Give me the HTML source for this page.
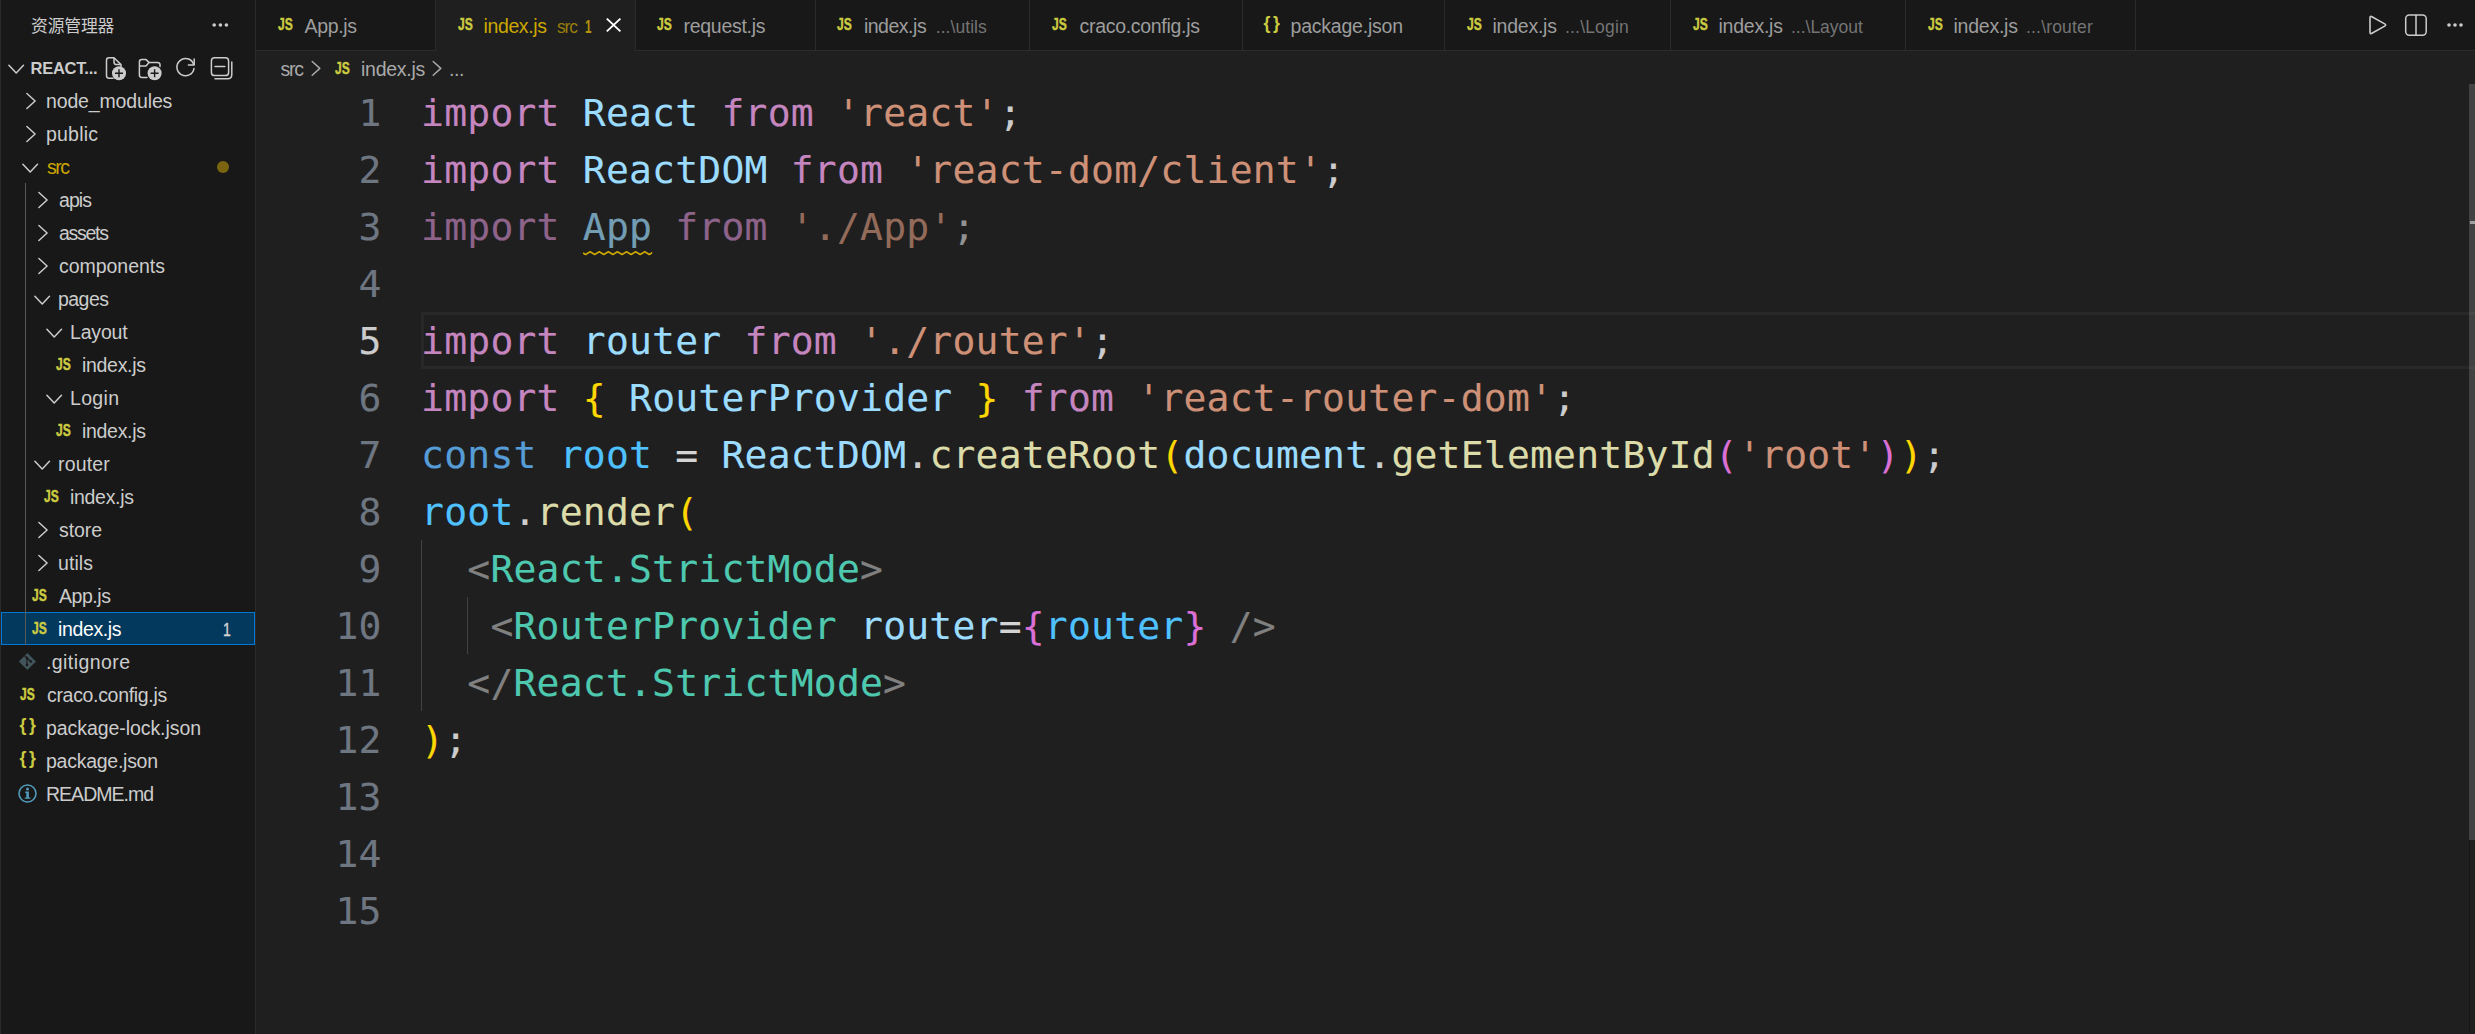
<!DOCTYPE html><html lang="zh-CN"><head><meta charset="utf-8"><title>index.js - VS Code</title><style>
html,body{margin:0;padding:0;background:#1f1f1f;overflow:hidden}
#app{position:relative;width:2475px;height:1034px;overflow:hidden;background:#1f1f1f}
.t{position:absolute;white-space:pre;line-height:1;font-family:"Liberation Sans","Noto Sans CJK SC",sans-serif}
.cl{position:absolute;white-space:pre;line-height:1;font-family:"DejaVu Sans Mono","Liberation Mono",monospace;font-size:38.0px;letter-spacing:0.2221px;-webkit-text-stroke:0.15px}
</style></head><body><div id="app">
<div style="position:absolute;left:0px;top:0px;width:2475px;height:1034px;background:#1f1f1f;"></div>
<div style="position:absolute;left:0px;top:0px;width:255px;height:1034px;background:#181818;"></div>
<div style="position:absolute;left:0px;top:0px;width:1px;height:1034px;background:#2b2b2b;"></div>
<div style="position:absolute;left:255px;top:0px;width:1px;height:1034px;background:#2b2b2b;"></div>
<div style="position:absolute;left:256px;top:0px;width:2219px;height:50px;background:#181818;"></div>
<div style="position:absolute;left:256px;top:50px;width:2219px;height:1px;background:#2b2b2b;"></div>
<div style="position:absolute;left:435px;top:0px;width:1px;height:50px;background:#2b2b2b;"></div>
<div style="position:absolute;left:436px;top:0px;width:199px;height:51px;background:#1f1f1f;"></div>
<div style="position:absolute;left:635px;top:0px;width:1px;height:50px;background:#2b2b2b;"></div>
<div style="position:absolute;left:815px;top:0px;width:1px;height:50px;background:#2b2b2b;"></div>
<div style="position:absolute;left:1029px;top:0px;width:1px;height:50px;background:#2b2b2b;"></div>
<div style="position:absolute;left:1242px;top:0px;width:1px;height:50px;background:#2b2b2b;"></div>
<div style="position:absolute;left:1444px;top:0px;width:1px;height:50px;background:#2b2b2b;"></div>
<div style="position:absolute;left:1670px;top:0px;width:1px;height:50px;background:#2b2b2b;"></div>
<div style="position:absolute;left:1905px;top:0px;width:1px;height:50px;background:#2b2b2b;"></div>
<div style="position:absolute;left:2135px;top:0px;width:1px;height:50px;background:#2b2b2b;"></div>
<svg style="position:absolute;left:604px;top:15px;overflow:visible;" width="20" height="20" viewBox="0 0 20 20" fill="none"><path d="M2.8 3.6 L16.4 16.4 M16.4 3.6 L2.8 16.4" stroke="#ffffff" stroke-width="1.9"/></svg>
<svg style="position:absolute;left:2360px;top:10px;overflow:visible;" width="40" height="34" viewBox="0 0 40 34" fill="none"><path d="M10.00 7.80 Q10.00 5.60 11.91 6.68 L24.69 13.92 Q26.60 15.00 24.69 16.08 L11.91 23.32 Q10.00 24.40 10.00 22.20 Z" stroke="#cccccc" stroke-width="1.6" stroke-linejoin="round"/></svg>
<svg style="position:absolute;left:2400px;top:10px;overflow:visible;" width="34" height="34" viewBox="0 0 34 34" fill="none"><rect x="5.7" y="5" width="20.5" height="20.2" rx="3.6" stroke="#cccccc" stroke-width="1.5"/><path d="M16 5 V25" stroke="#cccccc" stroke-width="1.5"/></svg>
<svg style="position:absolute;left:2440px;top:15px;overflow:visible;" width="30" height="20" viewBox="0 0 30 20" fill="none"><circle cx="9" cy="10" r="1.8" fill="#cccccc"/><circle cx="15" cy="10" r="1.8" fill="#cccccc"/><circle cx="21" cy="10" r="1.8" fill="#cccccc"/></svg>
<svg style="position:absolute;left:308px;top:58px;overflow:visible;" width="16" height="22" viewBox="0 0 16 22" fill="none"><path d="M4.2 3.5 L11.8 10.4 L4.2 17.2" stroke="#a9a9a9" stroke-width="1.5" stroke-linecap="round" stroke-linejoin="round"/></svg>
<svg style="position:absolute;left:429px;top:58px;overflow:visible;" width="16" height="22" viewBox="0 0 16 22" fill="none"><path d="M4.2 3.5 L11.8 10.4 L4.2 17.2" stroke="#a9a9a9" stroke-width="1.5" stroke-linecap="round" stroke-linejoin="round"/></svg>
<svg style="position:absolute;left:205px;top:15px;overflow:visible;" width="30" height="20" viewBox="0 0 30 20" fill="none"><circle cx="9.2" cy="10" r="1.8" fill="#cccccc"/><circle cx="15.4" cy="10" r="1.8" fill="#cccccc"/><circle cx="21.4" cy="10" r="1.8" fill="#cccccc"/></svg>
<svg style="position:absolute;left:8.0px;top:63.599999999999994px;overflow:visible;" width="18" height="12" viewBox="0 0 18 12" fill="none"><path d="M0.9 1.2 L8.2 9 L15.5 1.2" stroke="#cccccc" stroke-width="1.5" stroke-linecap="round" stroke-linejoin="round"/></svg>
<svg style="position:absolute;left:100px;top:50px;overflow:visible;" width="30" height="34" viewBox="0 0 30 34" fill="none"><path d="M13 28.2 H9 Q6.5 28.2 6.5 25.8 V10.2 Q6.5 7.8 9 7.8 H14 L21 14.6 V17" stroke="#cccccc" stroke-width="1.5" stroke-linejoin="round" stroke-linecap="round"/><path d="M14 8 V12 Q14 14.6 16.5 14.6 H21" stroke="#cccccc" stroke-width="1.5" stroke-linejoin="round"/><circle cx="19" cy="23.2" r="7" fill="#cccccc"/><path d="M19 19.2 V27.2 M15 23.2 H23" stroke="#181818" stroke-width="1.4"/></svg>
<svg style="position:absolute;left:133px;top:50px;overflow:visible;" width="34" height="34" viewBox="0 0 34 34" fill="none"><path d="M14 27.4 H8.8 Q6.4 27.4 6.4 25 V12 Q6.4 9.6 8.8 9.6 H13 L16 12.4 H24.5 Q27 12.4 27 14.8 V16.5" stroke="#cccccc" stroke-width="1.5" stroke-linejoin="round" stroke-linecap="round"/><path d="M6.4 16 H13 L16 12.6" stroke="#cccccc" stroke-width="1.5" stroke-linejoin="round"/><circle cx="21.6" cy="23.2" r="7" fill="#cccccc"/><path d="M21.6 19.2 V27.2 M17.6 23.2 H25.6" stroke="#181818" stroke-width="1.4"/></svg>
<svg style="position:absolute;left:170px;top:50px;overflow:visible;" width="32" height="34" viewBox="0 0 32 34" fill="none"><path d="M23.6 14.2 A8.6 8.6 0 1 0 24 18.6" stroke="#cccccc" stroke-width="1.5" stroke-linecap="round"/><path d="M24.2 9 V15 H18.4" stroke="#cccccc" stroke-width="1.5" stroke-linecap="round" stroke-linejoin="round"/></svg>
<svg style="position:absolute;left:205px;top:50px;overflow:visible;" width="32" height="34" viewBox="0 0 32 34" fill="none"><rect x="6.4" y="7.8" width="17.2" height="17.8" rx="3.2" stroke="#cccccc" stroke-width="1.5"/><path d="M10 16.6 H19.8" stroke="#cccccc" stroke-width="1.5" stroke-linecap="round"/><path d="M26.8 12 V24.5 Q26.8 28.8 22.5 28.8 H10" stroke="#cccccc" stroke-width="1.5" stroke-linecap="round"/></svg>
<div style="position:absolute;left:1px;top:612px;width:254px;height:33px;background:#04395e;box-sizing:border-box;border:1px solid #0078d4;"></div>
<div style="position:absolute;left:25px;top:183px;width:1px;height:462px;background:#585858;"></div>
<svg style="position:absolute;left:25.6px;top:92px;overflow:visible;" width="12" height="18" viewBox="0 0 12 18" fill="none"><path d="M0.9 1.5 L9.1 9 L0.9 16.5" stroke="#cccccc" stroke-width="1.5" stroke-linecap="round" stroke-linejoin="round"/></svg>
<svg style="position:absolute;left:25.6px;top:125px;overflow:visible;" width="12" height="18" viewBox="0 0 12 18" fill="none"><path d="M0.9 1.5 L9.1 9 L0.9 16.5" stroke="#cccccc" stroke-width="1.5" stroke-linecap="round" stroke-linejoin="round"/></svg>
<svg style="position:absolute;left:21.5px;top:162.6px;overflow:visible;" width="18" height="12" viewBox="0 0 18 12" fill="none"><path d="M0.9 1.2 L8.2 9 L15.5 1.2" stroke="#cccccc" stroke-width="1.5" stroke-linecap="round" stroke-linejoin="round"/></svg>
<svg style="position:absolute;left:37.6px;top:191px;overflow:visible;" width="12" height="18" viewBox="0 0 12 18" fill="none"><path d="M0.9 1.5 L9.1 9 L0.9 16.5" stroke="#cccccc" stroke-width="1.5" stroke-linecap="round" stroke-linejoin="round"/></svg>
<svg style="position:absolute;left:37.6px;top:224px;overflow:visible;" width="12" height="18" viewBox="0 0 12 18" fill="none"><path d="M0.9 1.5 L9.1 9 L0.9 16.5" stroke="#cccccc" stroke-width="1.5" stroke-linecap="round" stroke-linejoin="round"/></svg>
<svg style="position:absolute;left:37.6px;top:257px;overflow:visible;" width="12" height="18" viewBox="0 0 12 18" fill="none"><path d="M0.9 1.5 L9.1 9 L0.9 16.5" stroke="#cccccc" stroke-width="1.5" stroke-linecap="round" stroke-linejoin="round"/></svg>
<svg style="position:absolute;left:33.5px;top:294.6px;overflow:visible;" width="18" height="12" viewBox="0 0 18 12" fill="none"><path d="M0.9 1.2 L8.2 9 L15.5 1.2" stroke="#cccccc" stroke-width="1.5" stroke-linecap="round" stroke-linejoin="round"/></svg>
<svg style="position:absolute;left:45.5px;top:327.6px;overflow:visible;" width="18" height="12" viewBox="0 0 18 12" fill="none"><path d="M0.9 1.2 L8.2 9 L15.5 1.2" stroke="#cccccc" stroke-width="1.5" stroke-linecap="round" stroke-linejoin="round"/></svg>
<svg style="position:absolute;left:45.5px;top:393.6px;overflow:visible;" width="18" height="12" viewBox="0 0 18 12" fill="none"><path d="M0.9 1.2 L8.2 9 L15.5 1.2" stroke="#cccccc" stroke-width="1.5" stroke-linecap="round" stroke-linejoin="round"/></svg>
<svg style="position:absolute;left:33.5px;top:459.6px;overflow:visible;" width="18" height="12" viewBox="0 0 18 12" fill="none"><path d="M0.9 1.2 L8.2 9 L15.5 1.2" stroke="#cccccc" stroke-width="1.5" stroke-linecap="round" stroke-linejoin="round"/></svg>
<svg style="position:absolute;left:37.6px;top:521px;overflow:visible;" width="12" height="18" viewBox="0 0 12 18" fill="none"><path d="M0.9 1.5 L9.1 9 L0.9 16.5" stroke="#cccccc" stroke-width="1.5" stroke-linecap="round" stroke-linejoin="round"/></svg>
<svg style="position:absolute;left:37.6px;top:554px;overflow:visible;" width="12" height="18" viewBox="0 0 12 18" fill="none"><path d="M0.9 1.5 L9.1 9 L0.9 16.5" stroke="#cccccc" stroke-width="1.5" stroke-linecap="round" stroke-linejoin="round"/></svg>
<svg style="position:absolute;left:18px;top:652px;overflow:visible;" width="20" height="20" viewBox="0 0 20 20" fill="none"><path d="M9.4 0.9 L18 9.5 L9.4 18.1 L0.8 9.5 Z" fill="#41535b"/><path d="M6.4 3.6 L9 6 V13.1 M9 6 L12.8 9.5" stroke="#181818" stroke-width="1.1"/><circle cx="9" cy="6" r="1.25" fill="#181818"/><circle cx="9" cy="13.1" r="1.25" fill="#181818"/><circle cx="12.8" cy="9.5" r="1.25" fill="#181818"/></svg>
<svg style="position:absolute;left:17px;top:783px;overflow:visible;" width="24" height="24" viewBox="0 0 24 24" fill="none"><circle cx="10.5" cy="10.5" r="8.5" stroke="#519aba" stroke-width="1.6"/><path d="M8.2 8.6 H11.9 V14.4 H13.4 V15.8 H7.8 V14.4 H9.3 V10 H8.2 Z" fill="#519aba"/><circle cx="10.5" cy="5.9" r="1.5" fill="#519aba"/></svg>
<div style="position:absolute;left:217px;top:160.6px;width:12px;height:12px;border-radius:50%;background:#7b6410"></div>
<div style="position:absolute;left:421px;top:312px;width:2054px;height:56.8px;background:transparent;box-sizing:border-box;border-top:3px solid #282828;border-bottom:3px solid #282828;border-left:3px solid #282828;"></div>
<div style="position:absolute;left:421.3px;top:540.3px;width:1.2px;height:171px;background:#424242;"></div>
<div style="position:absolute;left:467.1px;top:597.3px;width:1.2px;height:57px;background:#424242;"></div>
<div style="position:absolute;left:2469px;top:84px;width:6px;height:756px;background:rgba(121,121,121,.4);"></div>
<div style="position:absolute;left:2469px;top:840px;width:1px;height:194px;background:#171717;"></div>
<div style="position:absolute;left:2470px;top:221px;width:5px;height:3px;background:#a0a0a0;"></div>
<svg style="position:absolute;left:582.6px;top:251px;overflow:visible;clip-path:inset(-2px 0.4px -2px 0)" width="70" height="6" viewBox="0 0 70 6" fill="none"><path d="M0 2.0 L2.60 3.5 L7.15 0.8 L11.70 3.5 L16.25 0.8 L20.80 3.5 L25.35 0.8 L29.90 3.5 L34.45 0.8 L39.00 3.5 L43.55 0.8 L48.10 3.5 L52.65 0.8 L57.20 3.5 L61.75 0.8 L66.30 3.5 L70.85 0.8" stroke="#cca700" stroke-width="1.6" fill="none" stroke-linejoin="round"/></svg>
<div class="t" style='left:277.80px;top:16.66px;font-size:16.0px;color:#cbcb41;transform:scaleX(0.7538);transform-origin:0 0;font-weight:700;-webkit-text-stroke:0.45px #cbcb41'>JS</div>
<div class="t" style='left:304.50px;top:17.49px;font-size:19.5px;color:#9d9d9d;letter-spacing:-0.349px'>App.js</div>
<div class="t" style='left:457.80px;top:16.66px;font-size:16.0px;color:#cbcb41;transform:scaleX(0.7538);transform-origin:0 0;font-weight:700;-webkit-text-stroke:0.45px #cbcb41'>JS</div>
<div class="t" style='left:483.50px;top:17.49px;font-size:19.5px;color:#cca700;letter-spacing:-0.381px'>index.js</div>
<div class="t" style='left:657.30px;top:16.66px;font-size:16.0px;color:#cbcb41;transform:scaleX(0.7538);transform-origin:0 0;font-weight:700;-webkit-text-stroke:0.45px #cbcb41'>JS</div>
<div class="t" style='left:683.50px;top:17.49px;font-size:19.5px;color:#9d9d9d;letter-spacing:-0.288px'>request.js</div>
<div class="t" style='left:837.30px;top:16.66px;font-size:16.0px;color:#cbcb41;transform:scaleX(0.7538);transform-origin:0 0;font-weight:700;-webkit-text-stroke:0.45px #cbcb41'>JS</div>
<div class="t" style='left:863.90px;top:17.49px;font-size:19.5px;color:#9d9d9d;letter-spacing:-0.481px'>index.js</div>
<div class="t" style='left:935.80px;top:19.19px;font-size:17.5px;color:#747474;letter-spacing:0.048px'>...\utils</div>
<div class="t" style='left:1051.80px;top:16.66px;font-size:16.0px;color:#cbcb41;transform:scaleX(0.7538);transform-origin:0 0;font-weight:700;-webkit-text-stroke:0.45px #cbcb41'>JS</div>
<div class="t" style='left:1079.50px;top:17.49px;font-size:19.5px;color:#9d9d9d;letter-spacing:-0.299px'>craco.config.js</div>
<div class="t" style='left:1263.50px;top:15.22px;font-size:17.7px;color:#cbcb41;letter-spacing:2.517px;font-weight:700'>{}</div>
<div class="t" style='left:1290.50px;top:17.49px;font-size:19.5px;color:#9d9d9d;letter-spacing:-0.215px'>package.json</div>
<div class="t" style='left:1466.80px;top:16.66px;font-size:16.0px;color:#cbcb41;transform:scaleX(0.7538);transform-origin:0 0;font-weight:700;-webkit-text-stroke:0.45px #cbcb41'>JS</div>
<div class="t" style='left:1492.50px;top:17.49px;font-size:19.5px;color:#9d9d9d;letter-spacing:-0.238px'>index.js</div>
<div class="t" style='left:1565.00px;top:19.19px;font-size:17.5px;color:#747474;letter-spacing:0.183px'>...\Login</div>
<div class="t" style='left:1692.80px;top:16.66px;font-size:16.0px;color:#cbcb41;transform:scaleX(0.7538);transform-origin:0 0;font-weight:700;-webkit-text-stroke:0.45px #cbcb41'>JS</div>
<div class="t" style='left:1718.50px;top:17.49px;font-size:19.5px;color:#9d9d9d;letter-spacing:-0.238px'>index.js</div>
<div class="t" style='left:1791.00px;top:19.19px;font-size:17.5px;color:#747474;letter-spacing:-0.014px'>...\Layout</div>
<div class="t" style='left:1927.80px;top:16.66px;font-size:16.0px;color:#cbcb41;transform:scaleX(0.7538);transform-origin:0 0;font-weight:700;-webkit-text-stroke:0.45px #cbcb41'>JS</div>
<div class="t" style='left:1953.50px;top:17.49px;font-size:19.5px;color:#9d9d9d;letter-spacing:-0.238px'>index.js</div>
<div class="t" style='left:2026.00px;top:19.19px;font-size:17.5px;color:#747474;letter-spacing:0.185px'>...\router</div>
<div class="t" style='left:556.90px;top:19.19px;font-size:17.5px;color:#987e09;letter-spacing:-1.139px'>src</div>
<div class="t" style='left:584.93px;top:19.10px;font-size:17.6px;color:#b3930a;transform:scaleX(0.6667);transform-origin:0 0;font-weight:700'>1</div>
<div class="t" style='left:280.40px;top:59.69px;font-size:19.5px;color:#a9a9a9;letter-spacing:-1.222px'>src</div>
<div class="t" style='left:334.80px;top:60.66px;font-size:16.0px;color:#cbcb41;transform:scaleX(0.7538);transform-origin:0 0;font-weight:700;-webkit-text-stroke:0.45px #cbcb41'>JS</div>
<div class="t" style='left:361.00px;top:59.69px;font-size:19.5px;color:#a9a9a9;letter-spacing:-0.252px'>index.js</div>
<div class="t" style='left:449.00px;top:59.69px;font-size:19.5px;color:#a9a9a9;letter-spacing:-0.418px'>...</div>
<div class="t" style='left:31.00px;top:19.28px;font-size:16.8px;color:#cccccc;letter-spacing:-0.131px;font-family:"Liberation Sans","Noto Sans CJK SC",sans-serif'>资源管理器</div>
<div class="t" style='left:30.50px;top:59.73px;font-size:16.5px;color:#cccccc;letter-spacing:-0.239px;font-weight:700'>REACT...</div>
<div class="t" style='left:46.00px;top:92.39px;font-size:19.5px;color:#cccccc;letter-spacing:-0.144px'>node_modules</div>
<div class="t" style='left:46.00px;top:125.39px;font-size:19.5px;color:#cccccc;letter-spacing:0.200px'>public</div>
<div class="t" style='left:47.00px;top:158.39px;font-size:19.5px;color:#cca700;letter-spacing:-1.522px'>src</div>
<div class="t" style='left:59.00px;top:191.39px;font-size:19.5px;color:#cccccc;letter-spacing:-0.941px'>apis</div>
<div class="t" style='left:59.00px;top:224.39px;font-size:19.5px;color:#cccccc;letter-spacing:-1.282px'>assets</div>
<div class="t" style='left:59.00px;top:257.39px;font-size:19.5px;color:#cccccc;letter-spacing:-0.031px'>components</div>
<div class="t" style='left:58.00px;top:290.39px;font-size:19.5px;color:#cccccc;letter-spacing:-0.545px'>pages</div>
<div class="t" style='left:70.00px;top:323.39px;font-size:19.5px;color:#cccccc;letter-spacing:-0.186px'>Layout</div>
<div class="t" style='left:55.80px;top:356.66px;font-size:16.0px;color:#cbcb41;transform:scaleX(0.7538);transform-origin:0 0;font-weight:700;-webkit-text-stroke:0.45px #cbcb41'>JS</div>
<div class="t" style='left:82.00px;top:356.39px;font-size:19.5px;color:#cccccc;letter-spacing:-0.310px'>index.js</div>
<div class="t" style='left:70.00px;top:389.39px;font-size:19.5px;color:#cccccc;letter-spacing:0.333px'>Login</div>
<div class="t" style='left:55.80px;top:422.66px;font-size:16.0px;color:#cbcb41;transform:scaleX(0.7538);transform-origin:0 0;font-weight:700;-webkit-text-stroke:0.45px #cbcb41'>JS</div>
<div class="t" style='left:82.00px;top:422.39px;font-size:19.5px;color:#cccccc;letter-spacing:-0.310px'>index.js</div>
<div class="t" style='left:58.00px;top:455.39px;font-size:19.5px;color:#cccccc;letter-spacing:0.151px'>router</div>
<div class="t" style='left:43.80px;top:488.66px;font-size:16.0px;color:#cbcb41;transform:scaleX(0.7538);transform-origin:0 0;font-weight:700;-webkit-text-stroke:0.45px #cbcb41'>JS</div>
<div class="t" style='left:70.00px;top:488.39px;font-size:19.5px;color:#cccccc;letter-spacing:-0.310px'>index.js</div>
<div class="t" style='left:59.00px;top:521.39px;font-size:19.5px;color:#cccccc;letter-spacing:-0.077px'>store</div>
<div class="t" style='left:58.00px;top:554.39px;font-size:19.5px;color:#cccccc;letter-spacing:0.068px'>utils</div>
<div class="t" style='left:31.80px;top:587.66px;font-size:16.0px;color:#cbcb41;transform:scaleX(0.7538);transform-origin:0 0;font-weight:700;-webkit-text-stroke:0.45px #cbcb41'>JS</div>
<div class="t" style='left:59.00px;top:587.39px;font-size:19.5px;color:#cccccc;letter-spacing:-0.449px'>App.js</div>
<div class="t" style='left:31.80px;top:620.66px;font-size:16.0px;color:#cbcb41;transform:scaleX(0.7538);transform-origin:0 0;font-weight:700;-webkit-text-stroke:0.45px #cbcb41'>JS</div>
<div class="t" style='left:58.00px;top:620.39px;font-size:19.5px;color:#ffffff;letter-spacing:-0.367px'>index.js</div>
<div class="t" style='left:46.00px;top:653.39px;font-size:19.5px;color:#cccccc;letter-spacing:0.425px'>.gitignore</div>
<div class="t" style='left:19.80px;top:686.66px;font-size:16.0px;color:#cbcb41;transform:scaleX(0.7538);transform-origin:0 0;font-weight:700;-webkit-text-stroke:0.45px #cbcb41'>JS</div>
<div class="t" style='left:47.00px;top:686.39px;font-size:19.5px;color:#cccccc;letter-spacing:-0.320px'>craco.config.js</div>
<div class="t" style='left:19.50px;top:717.22px;font-size:17.7px;color:#cbcb41;letter-spacing:2.517px;font-weight:700'>{}</div>
<div class="t" style='left:46.00px;top:719.39px;font-size:19.5px;color:#cccccc;letter-spacing:-0.065px'>package-lock.json</div>
<div class="t" style='left:19.50px;top:750.22px;font-size:17.7px;color:#cbcb41;letter-spacing:2.517px;font-weight:700'>{}</div>
<div class="t" style='left:46.00px;top:752.39px;font-size:19.5px;color:#cccccc;letter-spacing:-0.261px'>package.json</div>
<div class="t" style='left:46.00px;top:785.39px;font-size:19.5px;color:#cccccc;letter-spacing:-0.986px'>README.md</div>
<div class="t" style='left:222.70px;top:621.50px;font-size:17.6px;color:#d6d6d6;transform:scaleX(0.8000);transform-origin:0 0;-webkit-text-stroke:0.3px #d6d6d6'>1</div>
<div class="cl" style="left:358.50px;top:93.95px;color:#6e7681">1</div>
<div class="cl" style="left:421.1px;top:93.95px"><span style="color:#c586c0">import</span><span style="color:#cccccc"> </span><span style="color:#9cdcfe">React</span><span style="color:#cccccc"> </span><span style="color:#c586c0">from</span><span style="color:#cccccc"> </span><span style="color:#ce9178">&#x27;react&#x27;</span><span style="color:#cccccc">;</span></div>
<div class="cl" style="left:358.50px;top:150.95px;color:#6e7681">2</div>
<div class="cl" style="left:421.1px;top:150.95px"><span style="color:#c586c0">import</span><span style="color:#cccccc"> </span><span style="color:#9cdcfe">ReactDOM</span><span style="color:#cccccc"> </span><span style="color:#c586c0">from</span><span style="color:#cccccc"> </span><span style="color:#ce9178">&#x27;react-dom/client&#x27;</span><span style="color:#cccccc">;</span></div>
<div class="cl" style="left:358.50px;top:207.95px;color:#6e7681">3</div>
<div class="cl" style="left:421.1px;top:207.95px;opacity:.667"><span style="color:#c586c0">import</span><span style="color:#cccccc"> </span><span style="color:#9cdcfe">App</span><span style="color:#cccccc"> </span><span style="color:#c586c0">from</span><span style="color:#cccccc"> </span><span style="color:#ce9178">&#x27;./App&#x27;</span><span style="color:#cccccc">;</span></div>
<div class="cl" style="left:358.50px;top:264.95px;color:#6e7681">4</div>
<div class="cl" style="left:358.50px;top:321.95px;color:#cccccc">5</div>
<div class="cl" style="left:421.1px;top:321.95px"><span style="color:#c586c0">import</span><span style="color:#cccccc"> </span><span style="color:#9cdcfe">router</span><span style="color:#cccccc"> </span><span style="color:#c586c0">from</span><span style="color:#cccccc"> </span><span style="color:#ce9178">&#x27;./router&#x27;</span><span style="color:#cccccc">;</span></div>
<div class="cl" style="left:358.50px;top:378.95px;color:#6e7681">6</div>
<div class="cl" style="left:421.1px;top:378.95px"><span style="color:#c586c0">import</span><span style="color:#cccccc"> </span><span style="color:#ffd700">{</span><span style="color:#cccccc"> </span><span style="color:#9cdcfe">RouterProvider</span><span style="color:#cccccc"> </span><span style="color:#ffd700">}</span><span style="color:#cccccc"> </span><span style="color:#c586c0">from</span><span style="color:#cccccc"> </span><span style="color:#ce9178">&#x27;react-router-dom&#x27;</span><span style="color:#cccccc">;</span></div>
<div class="cl" style="left:358.50px;top:435.95px;color:#6e7681">7</div>
<div class="cl" style="left:421.1px;top:435.95px"><span style="color:#569cd6">const</span><span style="color:#cccccc"> </span><span style="color:#4fc1ff">root</span><span style="color:#cccccc"> </span><span style="color:#d4d4d4">=</span><span style="color:#cccccc"> </span><span style="color:#9cdcfe">ReactDOM</span><span style="color:#cccccc">.</span><span style="color:#dcdcaa">createRoot</span><span style="color:#ffd700">(</span><span style="color:#9cdcfe">document</span><span style="color:#cccccc">.</span><span style="color:#dcdcaa">getElementById</span><span style="color:#da70d6">(</span><span style="color:#ce9178">&#x27;root&#x27;</span><span style="color:#da70d6">)</span><span style="color:#ffd700">)</span><span style="color:#cccccc">;</span></div>
<div class="cl" style="left:358.50px;top:492.95px;color:#6e7681">8</div>
<div class="cl" style="left:421.1px;top:492.95px"><span style="color:#4fc1ff">root</span><span style="color:#cccccc">.</span><span style="color:#dcdcaa">render</span><span style="color:#ffd700">(</span></div>
<div class="cl" style="left:358.50px;top:549.95px;color:#6e7681">9</div>
<div class="cl" style="left:421.1px;top:549.95px"><span style="color:#cccccc">  </span><span style="color:#808080">&lt;</span><span style="color:#4ec9b0">React.StrictMode</span><span style="color:#808080">&gt;</span></div>
<div class="cl" style="left:335.40px;top:606.95px;color:#6e7681">10</div>
<div class="cl" style="left:421.1px;top:606.95px"><span style="color:#cccccc">   </span><span style="color:#808080">&lt;</span><span style="color:#4ec9b0">RouterProvider</span><span style="color:#cccccc"> </span><span style="color:#9cdcfe">router</span><span style="color:#d4d4d4">=</span><span style="color:#da70d6">{</span><span style="color:#4fc1ff">router</span><span style="color:#da70d6">}</span><span style="color:#cccccc"> </span><span style="color:#808080">/&gt;</span></div>
<div class="cl" style="left:335.40px;top:663.95px;color:#6e7681">11</div>
<div class="cl" style="left:421.1px;top:663.95px"><span style="color:#cccccc">  </span><span style="color:#808080">&lt;/</span><span style="color:#4ec9b0">React.StrictMode</span><span style="color:#808080">&gt;</span></div>
<div class="cl" style="left:335.40px;top:720.95px;color:#6e7681">12</div>
<div class="cl" style="left:421.1px;top:720.95px"><span style="color:#ffd700">)</span><span style="color:#cccccc">;</span></div>
<div class="cl" style="left:335.40px;top:777.95px;color:#6e7681">13</div>
<div class="cl" style="left:335.40px;top:834.95px;color:#6e7681">14</div>
<div class="cl" style="left:335.40px;top:891.95px;color:#6e7681">15</div>
</div></body></html>
